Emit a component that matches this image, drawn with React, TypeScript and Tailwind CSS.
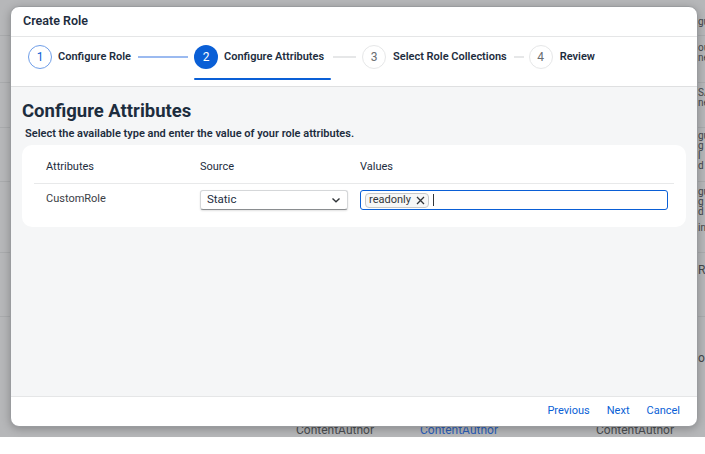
import React from "react";

function Circle({ n, state }: { n: number; state: "done" | "active" | "todo" }) {
  if (state === "active")
    return (
      <div className="w-[24px] h-[24px] rounded-full bg-[#0a5fd6] text-white flex items-center justify-center text-[12px] font-normal shrink-0">
        {n}
      </div>
    );
  if (state === "done")
    return (
      <div className="w-[24px] h-[24px] rounded-full bg-white border border-[#6f9ee8] text-[#0a5fd6] flex items-center justify-center text-[12px] font-normal shrink-0">
        {n}
      </div>
    );
  return (
    <div className="w-[24px] h-[24px] rounded-full bg-white border border-[#e6e7e8] text-[#6a6d70] flex items-center justify-center text-[12px] font-normal shrink-0">
      {n}
    </div>
  );
}

export default function App() {
  const font = { fontFamily: "Roboto, 'Noto Sans', sans-serif" };
  return (
    <div className="relative w-[705px] h-[454px] bg-white overflow-hidden" style={font}>
      {/* Background page (under overlay) */}
      <div className="h-[437px] bg-[#b6b7b9] flex flex-col text-[10px] text-[#45484b] leading-[10px]">
        <div className="h-[36px] border-b border-[#a9abad] pl-[698px] pt-[17px]">gu</div>
        <div className="h-[47px] border-b border-[#a9abad] pl-[698px] pt-[7px]">
          <div>ou</div>
          <div>ne</div>
        </div>
        <div className="h-[45px] border-b border-[#a9abad] pl-[698px] pt-[5px]">
          <div>SA</div>
          <div>ne</div>
        </div>
        <div className="h-[54px] border-b border-[#a9abad] pl-[698px] pt-[3px]">
          <div>gu</div>
          <div>g l</div>
          <div>d</div>
        </div>
        <div className="h-[71px] border-b border-[#a9abad] pt-[5px] flex">
          <div className="w-[698px] shrink-0" />
          <div>
            <div>gu</div>
            <div>g</div>
            <div>d</div>
            <div className="mt-[6px]">in</div>
          </div>
        </div>
        <div className="h-[64px] border-b border-[#a9abad] pl-[698px] pt-[12px] text-[12px]">R</div>
        <div className="h-[50px] pl-[698px] pt-[36px] text-[12px]">o</div>
        <div className="flex-1 flex items-end pb-[2px] text-[12px] text-[#4a4d50]">
          <div className="w-[296px] shrink-0" />
          <div className="w-[124px] shrink-0">ContentAuthor</div>
          <div className="w-[176px] shrink-0 text-[#2a5db8]">ContentAuthor</div>
          <div>ContentAuthor</div>
        </div>
      </div>

      {/* Dialog */}
      <div className="absolute left-[10px] top-[6px] w-[688px] h-[421px] rounded-[9px] bg-white shadow-[0_2px_8px_rgba(0,0,0,0.25)] border border-[#9a9c9f] flex flex-col overflow-hidden text-[#1d2d3e]">
        {/* Header */}
        <div className="h-[30px] shrink-0 flex items-center px-[12px] border-b border-[#e5e6e7]">
          <span className="text-[12.5px] font-semibold">Create Role</span>
        </div>

        {/* Stepper */}
        <div className="h-[50px] shrink-0 flex items-start pt-[8px] pl-[17px] border-b border-[#dfe0e1] text-[11px] font-semibold">
          <div className="flex items-center h-[24px]">
            <Circle n={1} state="done" />
            <span className="ml-[6px]">Configure Role</span>
            <div className="ml-[7px] w-[50px] h-[2px] bg-[#9bbaf0]" />
          </div>
          <div className="ml-[6px] flex flex-col">
            <div className="flex items-center h-[24px]">
              <Circle n={2} state="active" />
              <span className="ml-[6px]">Configure Attributes</span>
            </div>
            <div className="mt-[9px] h-[2px] w-[137px] bg-[#0a5fd6] rounded-full" />
          </div>
          <div className="flex items-center h-[24px]">
            <div className="ml-[2px] w-[23px] h-[2px] bg-[#e6e7e8]" />
            <div className="ml-[6px]">
              <Circle n={3} state="todo" />
            </div>
            <span className="ml-[7px]">Select Role Collections</span>
            <div className="ml-[7px] w-[10px] h-[2px] bg-[#e6e7e8]" />
            <div className="ml-[5px]">
              <Circle n={4} state="todo" />
            </div>
            <span className="ml-[7px]">Review</span>
          </div>
        </div>

        {/* Content */}
        <div className="flex-1 bg-[#f5f6f7] px-[11px] pt-[12px]">
          <div className="text-[18.5px] font-bold leading-[24px]">Configure Attributes</div>
          <div className="mt-[4px] ml-[3px] text-[11px] font-semibold leading-[14px]">
            Select the available type and enter the value of your role attributes.
          </div>
          <div className="mt-[4px] bg-white rounded-[10px] h-[82px] px-[12px] pt-[14px]">
            <div className="flex text-[11px] h-[25px] border-b border-[#e8e9ea] items-start">
              <div className="w-[154px] pl-[12px]">Attributes</div>
              <div className="w-[160px] pl-[12px]">Source</div>
              <div className="pl-[12px]">Values</div>
            </div>
            <div className="flex items-start pt-[6px] text-[11px]">
              <div className="w-[154px] pl-[12px] text-[#3b4046] pt-[1px]">CustomRole</div>
              <div className="w-[160px] pl-[12px]">
                <div className="w-[148px] h-[20px] rounded-[3px] border border-[#d5d7d9] border-b-[#8a8d90] shadow-[0_1px_2px_rgba(0,0,0,0.12)] bg-white flex items-center justify-between pl-[6px] pr-[6px] text-[11.5px]">
                  <span>Static</span>
                  <svg width="10" height="10" viewBox="0 0 10 10" fill="none">
                    <path d="M1.5 3.5 L5 6.8 L8.5 3.5" stroke="#32363a" strokeWidth="1.4" />
                  </svg>
                </div>
              </div>
              <div className="pl-[12px]">
                <div className="w-[308px] h-[20px] rounded-[3px] border-[1.5px] border-[#0a5fd6] bg-white flex items-center pl-[4px]">
                  <div className="h-[15px] rounded-[4px] border border-[#c6c8ca] bg-[#f7f7f7] flex items-center pl-[3px] pr-[3px] text-[11px] text-[#32363a]">
                    <span>readonly</span>
                    <svg className="ml-[5px]" width="9" height="9" viewBox="0 0 9 9">
                      <path d="M1 1 L8 8 M8 1 L1 8" stroke="#32363a" strokeWidth="1.3" />
                    </svg>
                  </div>
                  <div className="ml-[4px] w-[1px] h-[12px] bg-[#32363a]" />
                </div>
              </div>
            </div>
          </div>
        </div>

        {/* Footer */}
        <div className="h-[30px] shrink-0 border-t border-[#e5e6e7] flex items-center justify-end pr-[17px] gap-[17px] text-[11px] text-[#0a5fd6]">
          <span>Previous</span>
          <span>Next</span>
          <span>Cancel</span>
        </div>
      </div>
    </div>
  );
}
